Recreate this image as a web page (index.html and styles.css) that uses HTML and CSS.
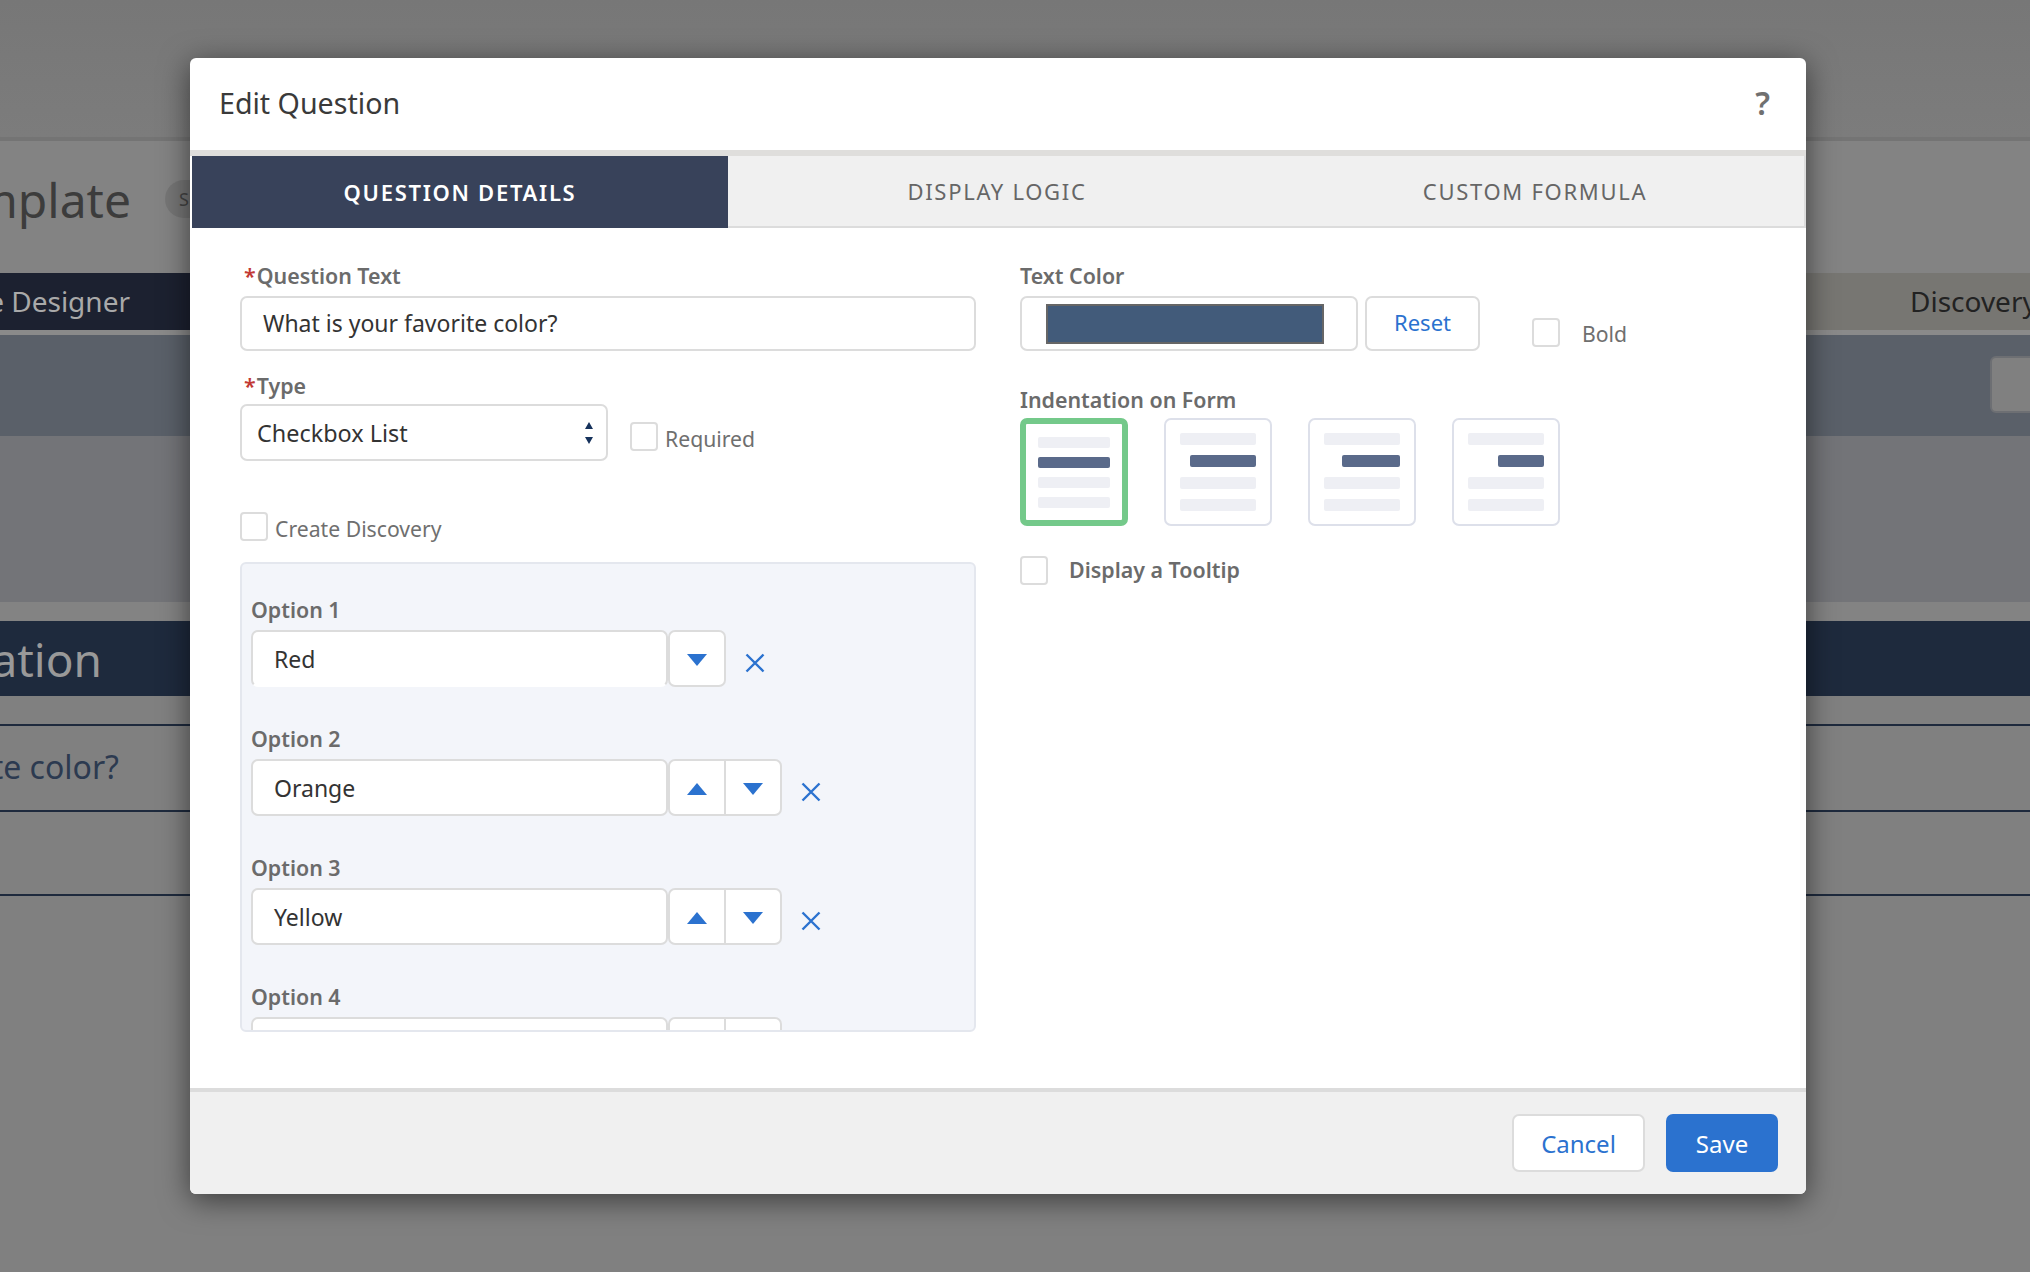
FILE: index.html
```html
<!DOCTYPE html>
<html lang="en">

<head>
    <meta charset="UTF-8">
    <title>Edit Question</title>
    <link rel="stylesheet" href="styles.css">
</head>

<body>
    <!-- Page behind the modal -->
    <div class="page">
        <div class="page-top"></div>
        <div class="page-title">
            <div class="clip-left title-clip">Form Template</div>
            <span class="badge">S</span>
        </div>
        <div class="page-tabs">
            <div class="page-tab-dark"><div class="clip-left tab-clip">Template Designer</div></div>
            <div class="page-tab-light">Discovery</div>
        </div>
        <div class="page-gap"></div>
        <div class="page-panel"><span class="page-panel-btn"></span></div>
        <div class="page-blank"></div>
        <div class="page-gap2"></div>
        <div class="page-section"><div class="clip-left section-clip">Question Information</div></div>
        <div class="page-row page-row-first"></div>
        <div class="page-row page-row-text"><div class="clip-left row-clip">What is your favorite color?</div></div>
        <div class="page-row page-row-last"></div>
    </div>

    <div class="modal">
        <div class="modal-header">
            <h2>Edit Question</h2>
            <span class="help">?</span>
        </div>

        <div class="tabs">
            <div class="tab active">QUESTION DETAILS</div>
            <div class="tab">DISPLAY LOGIC</div>
            <div class="tab">CUSTOM FORMULA</div>
        </div>

        <div class="modal-body">
            <div class="col-left">
                <label class="label"><span class="req">*</span>Question Text</label>
                <div class="input">What is your favorite color?</div>

                <label class="label label-type"><span class="req">*</span>Type</label>
                <div class="type-row">
                    <div class="select">
                        Checkbox List
                        <svg class="select-arrows" width="10" height="24" viewBox="0 0 10 24">
                            <path d="M5 1 L9 8 H1 Z M5 23 L9 16 H1 Z" fill="#16325c" />
                        </svg>
                    </div>
                    <span class="check check-required"></span>
                    <span class="check-text">Required</span>
                </div>

                <div class="discovery-row">
                    <span class="check"></span>
                    <span class="check-text">Create Discovery</span>
                </div>

                <div class="options">
                    <div class="option">
                        <label class="label">Option 1</label>
                        <div class="option-row">
                            <div class="input option-input no-bottom">Red</div>
                            <div class="arrows">
                                <button class="arrow"><span class="tri-down"></span></button>
                            </div>
                            <svg class="remove" width="20" height="20" viewBox="0 0 20 20">
                                <path d="M1.500 1.500 L18.500 18.500 M18.500 1.500 L1.500 18.500" stroke="#2b72cf" stroke-width="2.400" />
                            </svg>
                        </div>
                    </div>
                    <div class="option">
                        <label class="label">Option 2</label>
                        <div class="option-row">
                            <div class="input option-input">Orange</div>
                            <div class="arrows">
                                <button class="arrow"><span class="tri-up"></span></button>
                                <button class="arrow"><span class="tri-down"></span></button>
                            </div>
                            <svg class="remove" width="20" height="20" viewBox="0 0 20 20">
                                <path d="M1.500 1.500 L18.500 18.500 M18.500 1.500 L1.500 18.500" stroke="#2b72cf" stroke-width="2.400" />
                            </svg>
                        </div>
                    </div>
                    <div class="option">
                        <label class="label">Option 3</label>
                        <div class="option-row">
                            <div class="input option-input">Yellow</div>
                            <div class="arrows">
                                <button class="arrow"><span class="tri-up"></span></button>
                                <button class="arrow"><span class="tri-down"></span></button>
                            </div>
                            <svg class="remove" width="20" height="20" viewBox="0 0 20 20">
                                <path d="M1.500 1.500 L18.500 18.500 M18.500 1.500 L1.500 18.500" stroke="#2b72cf" stroke-width="2.400" />
                            </svg>
                        </div>
                    </div>
                    <div class="option">
                        <label class="label">Option 4</label>
                        <div class="option-row">
                            <div class="input option-input"></div>
                            <div class="arrows">
                                <button class="arrow"></button>
                                <button class="arrow"></button>
                            </div>
                        </div>
                    </div>
                </div>
            </div>

            <div class="col-right">
                <label class="label">Text Color</label>
                <div class="color-row">
                    <div class="color-field"><span class="swatch"></span></div>
                    <button class="btn-reset">Reset</button>
                    <span class="check check-bold"></span>
                    <span class="check-text bold-text">Bold</span>
                </div>

                <label class="label label-indent">Indentation on Form</label>
                <div class="indents">
                    <div class="indent selected">
                        <span class="bar"></span>
                        <span class="bar dark"></span>
                        <span class="bar"></span>
                        <span class="bar"></span>
                    </div>
                    <div class="indent">
                        <span class="bar"></span>
                        <span class="bar dark step-1"></span>
                        <span class="bar"></span>
                        <span class="bar"></span>
                    </div>
                    <div class="indent">
                        <span class="bar"></span>
                        <span class="bar dark step-2"></span>
                        <span class="bar"></span>
                        <span class="bar"></span>
                    </div>
                    <div class="indent">
                        <span class="bar"></span>
                        <span class="bar dark step-3"></span>
                        <span class="bar"></span>
                        <span class="bar"></span>
                    </div>
                </div>

                <div class="tooltip-row">
                    <span class="check"></span>
                    <span class="tooltip-text">Display a Tooltip</span>
                </div>
            </div>
        </div>

        <div class="modal-footer">
            <button class="btn-cancel">Cancel</button>
            <button class="btn-save">Save</button>
        </div>
    </div>
</body>

</html>
```

FILE: styles.css
```css
* {
    box-sizing: border-box;
}

html,
body {
    margin: 0;
    padding: 0;
    height: 100%;
    overflow: hidden;
}

body {
    font-family: "Noto Sans", "Open Sans", sans-serif;
    background: #808080;
    color: #333;
    position: relative;
}

/* Page behind the modal */
.page {
    height: 1272px;
    background: #808080;
}

.clip-left {
    display: flex;
    justify-content: flex-end;
    white-space: nowrap;
}

.page-top {
    height: 141px;
    background: linear-gradient(#777, #7c7c7c);
    border-bottom: 4px solid #747474;
}

.page-title {
    height: 132px;
    background: #838383;
    display: flex;
    align-items: center;
}

.title-clip {
    width: 131px;
    font-size: 48px;
    color: #3c3c3c;
    margin-bottom: 16px;
}

.badge {
    width: 60px;
    height: 38px;
    margin: 0 0 16px 34px;
    border-radius: 19px;
    background: #767676;
    color: #444;
    font-size: 18px;
    line-height: 38px;
    padding-left: 14px;
}

.page-tabs {
    height: 57px;
    display: flex;
    font-size: 28px;
    line-height: 57px;
}

.page-tab-dark {
    width: 400px;
    background: #1c2130;
    color: #a9a9a9;
}

.tab-clip {
    width: 130px;
}

.page-tab-light {
    flex: 1;
    background: #777672;
    color: #222;
    padding-left: 1510px;
    white-space: nowrap;
    overflow: hidden;
}

.page-gap {
    height: 5px;
    background: #8a8a8a;
}

.page-panel {
    height: 101px;
    background: #5a6069;
    padding: 21px 0 0 1990px;
}

.page-panel-btn {
    display: block;
    width: 60px;
    height: 57px;
    background: #808080;
    border: 2px solid #6d6f73;
    border-radius: 6px;
}

.page-blank {
    height: 166px;
    background: #737478;
}

.page-gap2 {
    height: 19px;
    background: #838383;
}

.page-section {
    height: 75px;
    background: #1e2a3d;
    color: #999;
    font-size: 46px;
    line-height: 77px;
}

.section-clip {
    width: 102px;
}

.page-row {
    border-bottom: 2px solid #1e2a3d;
}

.page-row-first {
    height: 30px;
}

.page-row-text {
    height: 86px;
    font-size: 32px;
    line-height: 82px;
    color: #2c3a50;
}

.page-row-last {
    height: 84px;
}

.row-clip {
    width: 119px;
}

/* Modal */
.modal {
    position: absolute;
    left: 190px;
    top: 58px;
    width: 1616px;
    height: 1136px;
    background: white;
    border-radius: 6px;
    box-shadow: 0 6px 30px rgba(0, 0, 0, 0.55);
    display: flex;
    flex-direction: column;
    overflow: hidden;
}

.modal-header {
    height: 92px;
    padding: 0 36px 4px 29px;
    display: flex;
    justify-content: space-between;
    align-items: center;
}

.modal-header h2 {
    margin: 0;
    font-size: 28.600px;
    font-weight: 400;
    color: #3a3a3a;
}

.help {
    font-size: 32px;
    font-weight: 600;
    color: #707070;
}

.tabs {
    height: 78px;
    display: flex;
    border-top: 6px solid #dfdedc;
    padding-left: 2px;
    background: white;
}

.tab {
    flex: 1;
    background: #f0f0f0;
    border-bottom: 2px solid #dcdcdc;
    font-size: 22px;
    letter-spacing: 1.700px;
    color: #666;
    display: flex;
    align-items: center;
    justify-content: center;
}

.tab:last-child {
    border-right: 2px solid #dcdcdc;
}

.tab.active {
    flex: none;
    width: 536px;
    background: #38425a;
    border-bottom: none;
    color: white;
    font-weight: 600;
}

.modal-body {
    flex: 1;
    display: flex;
    padding: 34px 0 0 50px;
}

.col-left {
    width: 736px;
}

.col-right {
    margin-left: 44px;
    flex: 1;
}

.label {
    display: block;
    height: 28px;
    font-size: 21.400px;
    font-weight: 600;
    line-height: 28px;
    color: #6b6b6b;
}

.req {
    color: #c23934;
    margin: 0 1px 0 4px;
}

.input {
    height: 55px;
    margin-top: 6px;
    padding-left: 21px;
    background: white;
    border: 2px solid #dcdcdc;
    border-radius: 7px;
    font-size: 23px;
    line-height: 50px;
    color: #333;
}

.label-type {
    margin-top: 21px;
}

.type-row {
    display: flex;
    margin-top: 4px;
}

.select {
    width: 368px;
    height: 57px;
    padding: 1px 0 0 15px;
    border: 2px solid #dcdcdc;
    border-radius: 7px;
    font-size: 23.400px;
    line-height: 53px;
    display: flex;
    justify-content: space-between;
    align-items: center;
}

.select-arrows {
    margin-right: 12px;
}

.check {
    flex: none;
    display: block;
    width: 28px;
    height: 29px;
    background: white;
    border: 2px solid #dcdcdc;
    border-radius: 4px;
}

.check-text {
    font-size: 21.200px;
    color: #6f6f6f;
    line-height: 29px;
}

.check-required {
    margin: 18px 7px 0 22px;
}

.type-row .check-text {
    margin-top: 20px;
}

.discovery-row {
    display: flex;
    gap: 7px;
    height: 29px;
    margin-top: 51px;
}

.discovery-row .check-text {
    margin-top: 2px;
}

.options {
    height: 470px;
    margin-top: 21px;
    padding: 33px 9px 0;
    background: #f3f5fa;
    border: 2px solid #e4e7ee;
    border-radius: 6px;
    overflow: hidden;
}

.option {
    margin-bottom: 39px;
}

.option .label {
    line-height: 26px;
}

.option-row {
    display: flex;
    margin-top: 5px;
    height: 57px;
}

.option-input {
    width: 417px;
    height: 57px;
    margin-top: 0;
    line-height: 54px;
}

.no-bottom {
    border-bottom-color: transparent;
}

.arrows {
    display: flex;
    background: white;
    border: 2px solid #dcdcdc;
    border-radius: 7px;
}

.arrow {
    width: 56px;
    padding: 5px 0 0;
    background: none;
    border: none;
    border-left: 2px solid #dcdcdc;
}

.arrow:first-child {
    width: 54px;
    border-left: none;
}

.tri-down,
.tri-up {
    display: inline-block;
    border-left: 10px solid transparent;
    border-right: 10px solid transparent;
}

.tri-down {
    border-top: 12px solid #2b72cf;
}

.tri-up {
    border-bottom: 12px solid #2b72cf;
}

.remove {
    margin: 23px 0 0 19px;
}

.color-row {
    display: flex;
    margin-top: 6px;
}

.color-field {
    width: 338px;
    height: 55px;
    padding: 6px 0 0 24px;
    border: 2px solid #dcdcdc;
    border-radius: 7px;
}

.swatch {
    display: block;
    width: 278px;
    height: 40px;
    background: #425b7a;
    border: 2px solid #666;
}

.btn-reset {
    width: 115px;
    height: 55px;
    margin-left: 7px;
    padding-bottom: 5px;
    background: white;
    border: 2px solid #dcdcdc;
    border-radius: 7px;
    font-family: inherit;
    font-size: 22px;
    color: #2b72cf;
}

.check-bold {
    margin: 22px 22px 0 52px;
}

.bold-text {
    margin-top: 23px;
}

.label-indent {
    margin-top: 35px;
}

.indents {
    display: flex;
    gap: 36px;
    margin-top: 4px;
}

.indent {
    width: 108px;
    height: 108px;
    padding: 13px 14px 0;
    border: 2px solid #dde0ea;
    border-radius: 7px;
    display: flex;
    flex-direction: column;
    gap: 10px;
}

.indent.selected {
    padding: 13px 12px 0;
    border: 6px solid #74c98a;
    gap: 9px;
}

.bar {
    display: block;
    height: 12px;
    background: #eeeff4;
    border-radius: 2px;
}

.selected .bar {
    height: 11px;
}

.bar.dark {
    background: #5a6a8a;
}

.step-1 {
    margin-left: 10px;
}

.step-2 {
    margin-left: 18px;
}

.step-3 {
    margin-left: 30px;
}

.tooltip-row {
    display: flex;
    gap: 21px;
    margin-top: 30px;
}

.tooltip-text {
    font-size: 21.400px;
    font-weight: 600;
    line-height: 27px;
    color: #6b6b6b;
}

.modal-footer {
    height: 106px;
    padding: 22px 28px 0 0;
    display: flex;
    justify-content: flex-end;
    gap: 21px;
    background: #f0f0f0;
    border-top: 4px solid #dcdcdc;
}

.modal-footer button {
    height: 58px;
    padding-bottom: 1px;
    border-radius: 7px;
    font-family: inherit;
    font-size: 24px;
}

.btn-cancel {
    width: 133px;
    background: white;
    border: 2px solid #dcdcdc;
    color: #2b72cf;
}

.btn-save {
    width: 112px;
    background: #2b72cf;
    border: none;
    color: white;
}
```
